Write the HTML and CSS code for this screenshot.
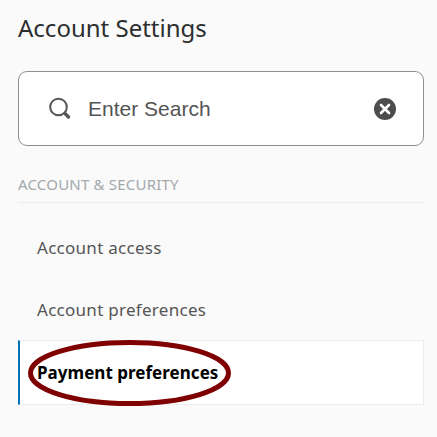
FILE: index.html
```html
<!DOCTYPE html>
<html lang="en">
<head>
<meta charset="utf-8">
<title>Account Settings</title>
<link rel="stylesheet" href="styles.css">
</head>
<body>
<main class="panel">
  <h1 class="title">Account Settings</h1>
  <div class="search">
    <svg class="search-icon" width="24" height="24" viewBox="0 0 24 24" aria-hidden="true">
      <circle cx="11.5" cy="10" r="8.3" fill="none" stroke="#555" stroke-width="2"/>
      <path d="M18 16.5l3.5 3.5" fill="none" stroke="#555" stroke-width="3.4" stroke-linecap="round"/>
    </svg>
    <span class="search-text">Enter Search</span>
    <svg class="clear-icon" width="22" height="22" viewBox="0 0 22 22" aria-hidden="true">
      <circle cx="11" cy="11" r="11" fill="#4d4d4f"/>
      <path d="M7 7l8 8M15 7l-8 8" fill="none" stroke="#fff" stroke-width="2.6" stroke-linecap="round"/>
    </svg>
  </div>
  <h2 class="section">ACCOUNT &amp; SECURITY</h2>
  <nav class="menu">
    <a class="item">Account access</a>
    <a class="item">Account preferences</a>
    <a class="item active">Payment preferences
      <svg class="circle" width="204" height="66" viewBox="0 0 204 66" aria-hidden="true">
        <ellipse cx="101.5" cy="33" rx="99" ry="30.5" fill="none" stroke="#7f0000" stroke-width="5"/>
      </svg>
    </a>
  </nav>
</main>
</body>
</html>
```
FILE: styles.css
```css
* { box-sizing: border-box; }
html, body { margin: 0; height: 100%; }
body {
  background: #fafafa;
  font-family: "Noto Sans", "Open Sans", sans-serif;
  overflow: hidden;
}
.panel { padding: 12px 13px 0 18px; }
.title {
  margin: 0;
  font-size: 24px;
  line-height: 32px;
  font-weight: 400;
  color: #2c2e2f;
}
.search {
  display: flex;
  align-items: center;
  height: 75px;
  margin-top: 27px;
  padding: 0 27px 0 28px;
  background: #fff;
  border: 1px solid #8f8f8f;
  border-radius: 9px;
}
.search-icon { flex: none; }
.search-text {
  flex: 1;
  margin-left: 17px;
  font-family: "Liberation Sans", Arial, sans-serif;
  font-size: 21px;
  color: #545454;
}
.clear-icon { flex: none; }
.section {
  margin: 28px 0 0;
  padding-bottom: 8px;
  font-size: 15px;
  line-height: 20px;
  font-weight: 400;
  letter-spacing: 0.2px;
  color: #a3a8ab;
  border-bottom: 1px solid #ececec;
}
.menu { display: flex; flex-direction: column; margin-top: 13px; }
.item {
  display: flex;
  align-items: center;
  height: 62px;
  padding-left: 19px;
  font-size: 17px;
  letter-spacing: 0.28px;
  color: #555;
}
.item.active {
  position: relative;
  height: 65px;
  padding-left: 17px;
  font-weight: 700;
  letter-spacing: 0.03px;
  color: #000;
  background: #fff;
  border: 1px solid #ececec;
  border-left: 2px solid #0070ba;
}
.circle { position: absolute; left: 8px; top: -1px; }
```
